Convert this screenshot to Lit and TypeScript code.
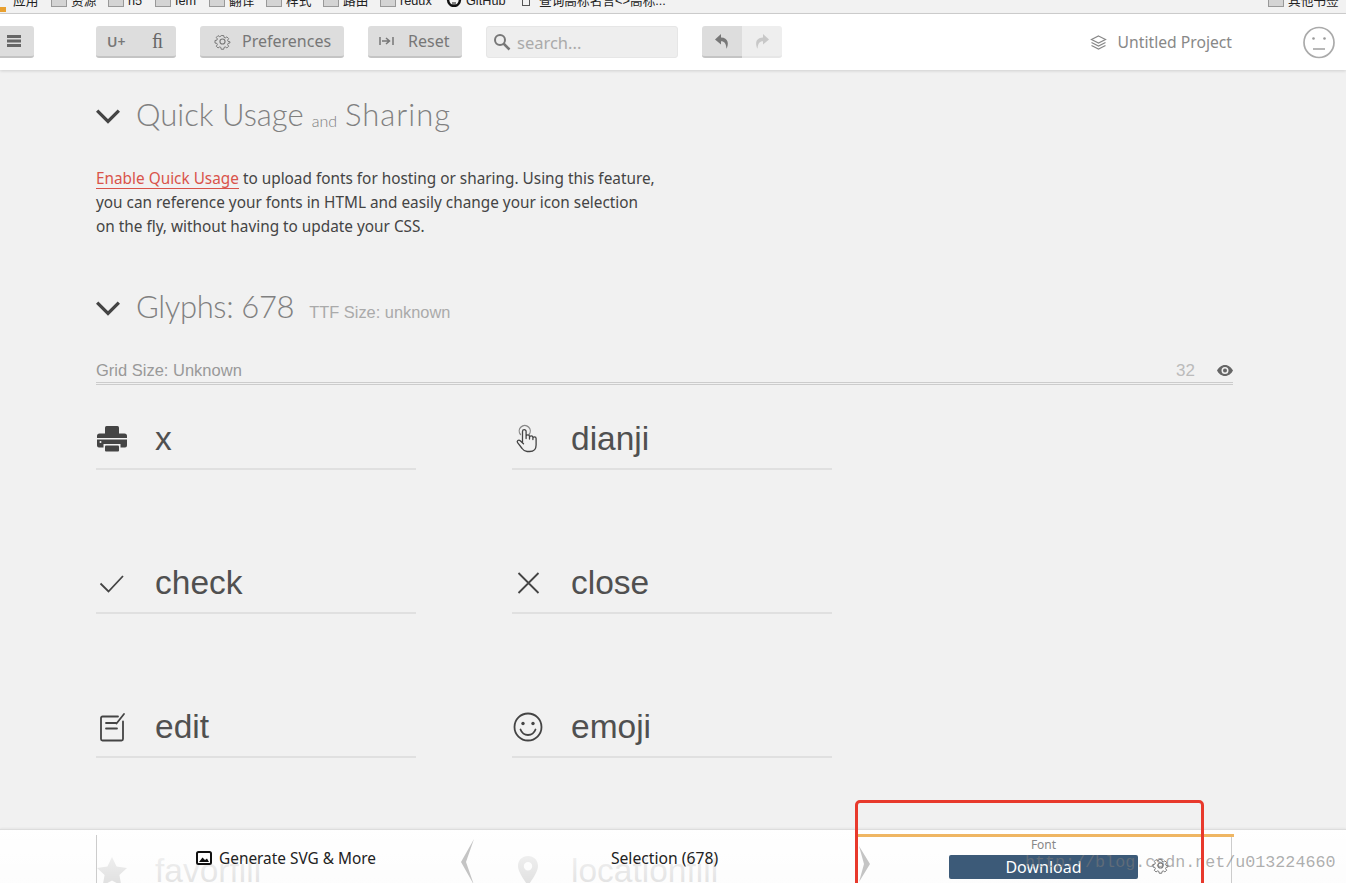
import { LitElement, html, css, svg } from "lit";
import { customElement } from "lit/decorators.js";

const gear = (s: number, c: string) => html`<svg width=${s} height=${s} viewBox="0 0 24 24" fill="none" stroke=${c} stroke-width="1.6"><circle cx="12" cy="12" r="3.6"/><path d="M10 2.5h4l.6 3 1.9.8 2.6-1.7 2.8 2.8-1.7 2.6.8 1.9 3 .6-.1 1.9-2.9.7-.8 1.9 1.7 2.6-2.8 2.8-2.6-1.7-1.9.8-.6 3h-4l-.6-3-1.9-.8-2.6 1.7-2.8-2.8 1.7-2.6-.8-1.9-3-.6v-4l3-.6.8-1.9-1.7-2.6 2.8-2.8 2.6 1.7 1.9-.8z" transform="translate(1.4 1.4) scale(.88)"/></svg>`;

const icons: Record<string, unknown> = {
  printer: html`<svg width="32" height="28" viewBox="0 0 32 28" fill="#444"><rect x="9" y="1" width="14" height="9" rx="1.5"/><path d="M3.5 8.5h25a2.5 2.5 0 0 1 2.5 2.5v2H1v-2a2.5 2.5 0 0 1 2.5-2.5zM1 14.500h30v6a2 2 0 0 1-2 2h-4.500v-3.500h-17v3.500H3a2 2 0 0 1-2-2z"/><rect x="9" y="20.500" width="14" height="6" rx="1"/><circle cx="4.500" cy="17" r="1" fill="#f1f1f1"/></svg>`,
  hand: html`<svg width="32" height="30" viewBox="0 0 32 30" fill="none" stroke="#444" stroke-width="1.3" stroke-linejoin="round" stroke-linecap="round"><path d="M8.500 10.500a5.500 5.500 0 1 1 8.500 0" stroke="#888"/><path d="M10.500 18V7.500a1.800 1.800 0 0 1 3.600 0V14.500M14.100 12.500a1.700 1.700 0 0 1 3.400 0v2.500M17.500 13.500a1.700 1.700 0 0 1 3.400 0v2M20.900 14.500a1.600 1.600 0 0 1 3.200 0v6.500c0 4-2.600 6.500-6.500 6.500h-2.500c-2.500 0-3.800-1.300-5-3l-4.500-5.800c-1.200-1.700 1-3.500 2.600-2l3.300 3"/></svg>`,
  check: html`<svg width="32" height="28" viewBox="0 0 32 28" fill="none" stroke="#444" stroke-width="1.800"><path d="M4.500 14.500l8 8L27 7"/></svg>`,
  close: html`<svg width="32" height="28" viewBox="0 0 32 28" fill="none" stroke="#444" stroke-width="1.800"><path d="M6.500 4l20 20M26.500 4l-20 20"/></svg>`,
  edit: html`<svg width="32" height="30" viewBox="0 0 32 30" fill="none" stroke="#444" stroke-width="1.800" stroke-linecap="round"><path d="M22 4.500H6.500a1.500 1.500 0 0 0-1.500 1.500v21a1.500 1.500 0 0 0 1.500 1.500h19a1.500 1.500 0 0 0 1.500-1.500V9.500"/><path d="M10 11h10M10 16.500h11M20.500 11.500L28 2"/></svg>`,
  emoji: html`<svg width="32" height="32" viewBox="0 0 32 32" fill="none" stroke="#444" stroke-width="1.800"><circle cx="16" cy="16" r="13.500"/><circle cx="11" cy="12.500" r="1.700" fill="#444" stroke="none"/><circle cx="21" cy="12.500" r="1.700" fill="#444" stroke="none"/><path d="M8.500 18.500c1.500 4 4.300 5.500 7.500 5.500s6-1.500 7.500-5.500" stroke-linecap="round"/></svg>`,
  star: html`<svg width="32" height="30" viewBox="0 0 32 30" fill="#444"><path d="M16 1l4.600 9.500 10.400 1.400-7.600 7.200 1.900 10.400L16 24.500l-9.300 5 1.900-10.400L1 11.900l10.400-1.400z"/></svg>`,
  pin: html`<svg width="32" height="32" viewBox="0 0 32 32" fill="#444"><path fill-rule="evenodd" d="M16 1c5.800 0 10 4.300 10 10 0 6-6 13.500-10 20-4-6.500-10-14-10-20C6 5.300 10.200 1 16 1zm0 6a4.200 4.200 0 1 0 0 8.400A4.200 4.200 0 0 0 16 7z"/></svg>`,
};

const glyphs: [string, string][] = [
  ["printer", "x"], ["hand", "dianji"],
  ["check", "check"], ["close", "close"],
  ["edit", "edit"], ["emoji", "emoji"],
  ["star", "favorfill"], ["pin", "locationfill"],
];

const bookmarks: [string, number, string][] = [
  ["应用", 13, ""], ["资源", 71, "f"], ["h5", 128, "f"], ["fem", 175, "f"],
  ["翻译", 229, "f"], ["样式", 286, "f"], ["路由", 343, "f"], ["redux", 400, "f"],
  ["GitHub", 466, "g"], ["查询高标名言<>高标...", 539, "d"],
];

const chevron = svg`<path d="M2 8l10 10 10-10" fill="none" stroke="#444" stroke-width="3"/>`;

const bmIcon = (k: string) =>
  k === "f"
    ? html`<i class="folder"></i>`
    : k === "g"
      ? html`<svg class="gh" width="16" height="14" viewBox="0 0 16 14" fill="none" stroke="#111" stroke-width="2.500"><path d="M2 6c0 4 2.500 7 6 7s6-3 6-7"/><path d="M7 9v5M9 9v5" stroke-width="1"/></svg>`
      : k === "d"
        ? html`<i class="doc"></i>`
        : "";

@customElement("app-root")
export class AppRoot extends LitElement {
  static styles = css`
    :host { display: block; position: relative; width: 1346px; height: 883px; overflow: hidden; background: #f1f1f1; font-family: "Noto Sans", sans-serif; color: #444; }
    .bm { height: 14px; box-sizing: border-box; background: #f2f2f2; border-bottom: 1px solid #d0d0d0; display: flex; align-items: flex-end; overflow: hidden; font: 12.700px/17px "Liberation Sans", "Noto Sans CJK SC", sans-serif; color: #222; position: relative; }
    .bm-row { display: flex; width: 100%; height: 20px; flex: none; align-items: flex-start; }
    .bm-item { width: 0; flex: none; white-space: nowrap; display: block; }
    .bm-item span { display: inline-block; }
    .folder { display: inline-block; width: 16px; height: 14px; background: #d4d4d4; border: 1px solid #999; box-sizing: border-box; margin: 0 4px 0 -20px; vertical-align: top; }
    .gh { margin: 0 4px 0 -20px; vertical-align: top; }
    .doc { display: inline-block; width: 8px; height: 13px; border: 1px solid #555; box-sizing: border-box; margin: 0 9px 0 -17px; vertical-align: top; }
    .bm-spacer { white-space: nowrap; width: 0; }
    .bm-dot { position: absolute; left: 0; bottom: 1px; width: 6px; height: 5px; background: #e8a030; }
    .bar { height: 56px; box-sizing: border-box; background: #fff; box-shadow: 0 1px 3px rgba(0,0,0,.14); display: flex; align-items: center; padding-right: 11px; position: relative; }
    .btn { height: 32px; box-sizing: border-box; background: #ddd; border-bottom: 2px solid #c4c4c4; border-radius: 3px; display: flex; align-items: center; color: #777; font-size: 16px; }
    .menu { width: 34px; padding-left: 7px; border-radius: 0 3px 3px 0; margin-right: 62px; }
    .cp { width: 80px; margin-right: 24px; justify-content: space-between; padding: 0 13px 0 11px; }
    .cp .u { font-size: 14px; font-weight: 600; }
    .cp .fi { font: 20px "Liberation Serif", serif; color: #666; }
    .pref { width: 144px; padding-left: 14px; gap: 11px; margin-right: 24px; }
    .reset { width: 94px; padding-left: 11px; gap: 12px; margin-right: 24px; }
    .search { width: 192px; height: 32px; box-sizing: border-box; background: #eee; border: 1px solid #e6e6e6; border-radius: 3px; display: flex; align-items: center; padding-left: 6px; gap: 6px; color: #aaa; font-size: 16.500px; margin-right: 24px; }
    .hist { display: flex; width: 80px; height: 32px; }
    .hist div { flex: 1; display: flex; align-items: center; justify-content: center; box-sizing: border-box; }
    .hist .on { background: #ddd; border-bottom: 2px solid #c4c4c4; border-radius: 3px 0 0 3px; }
    .hist .off { background: #eee; border-bottom: 2px solid #e6e6e6; border-radius: 0 3px 3px 0; }
    .proj { margin-left: auto; display: flex; align-items: center; gap: 11px; color: #888; font-size: 15.700px; margin-right: 71px; }
    .main { padding: 0 113px 0 96px; }
    .h { display: flex; align-items: center; height: 40px; font: 300 31px "Lato", sans-serif; color: #808080; white-space: nowrap; }
    .h svg { width: 26px; height: 26px; margin: 0 15px 0 -1px; flex: none; }
    .h .t { padding-bottom: 2px; }
    .h .first { margin-right: 8px; }
    .h .sharing { letter-spacing: 1px; }
    .h small { font-size: 16px; margin: 10px 8px 0 0; }
    .h1 { margin-top: 25px; }
    .h2 { margin-top: 49px; }
    .h2 .glyph { letter-spacing: -.35px; }
    .h2 .sub { font: 16.400px "Liberation Sans", sans-serif; color: #aaa; margin: 11px 0 0 15px; }
    .p { margin: 31px 0 0; font-size: 15.350px; line-height: 24px; color: #444; width: 560px; }
    .p a { color: #d9534a; border-bottom: 1px solid #d9534a; }
    .grid-bar { margin-top: 33px; height: 25px; box-sizing: border-box; display: flex; align-items: center; justify-content: space-between; border-bottom: 3px double #ccc; font: 16.500px "Liberation Sans", sans-serif; color: #999; padding-bottom: 1px; }
    .grid-right { display: flex; align-items: center; color: #bbb; font-size: 17px; gap: 22px; }
    .grid { display: grid; grid-template-columns: 320px 320px; column-gap: 96px; row-gap: 84px; margin-top: 25px; }
    .item { height: 60px; box-sizing: border-box; border-bottom: 2px solid #e0e0e0; display: flex; align-items: center; }
    .ic { width: 32px; display: flex; justify-content: center; }
    .name { margin-left: 27px; font: 33.500px "Liberation Sans", sans-serif; color: #505050; white-space: nowrap; }
    .foot { position: absolute; left: 0; right: 0; bottom: 0; height: 54px; box-sizing: border-box; border-top: 1px solid #ddd; background: linear-gradient(rgba(255,255,255,.99), rgba(255,255,255,.84)); padding: 0 114px 0 96px; box-shadow: 0 -1px 2px rgba(0,0,0,.05); }
    .tabs { display: grid; grid-template-columns: 378px 379px 379px; height: 100%; border: 0 solid #ccc; border-width: 0 1px; box-sizing: border-box; margin-top: 5px; position: relative; }
    .tab { position: relative; display: flex; align-items: center; justify-content: center; font-size: 15.400px; color: #222; height: 48px; }
    .tab-text { transform: translateY(-1px); display: flex; align-items: center; gap: 7px; }
    .selection { font-size: 15.700px; }
    .tab3 { display: block; text-align: center; font-size: 12px; color: #888; border-top: 3px solid #efb663; height: 46px; margin: -1px -1px 0 4px; box-sizing: border-box; padding-right: 5px; line-height: 15px; }
    .dl { width: 189px; height: 24px; margin: 3px auto 0; background: #3c5a78; color: #fff; border-radius: 2px; font-size: 16px; line-height: 24px; }
    .gear { position: absolute; left: 294px; top: 20px; }
    .chev { position: absolute; }
    .c1 { right: 0; top: 4px; }
    .c2 { left: 0; top: 9px; }
    .mark { position: absolute; left: 1025px; top: 853px; font: 16.700px "Liberation Mono", monospace; color: rgba(120,120,120,.6); white-space: nowrap; }
    .red { position: absolute; left: 855px; top: 800px; width: 349px; height: 90px; box-sizing: border-box; border: 3px solid #e8392c; border-radius: 5px; }
  `;

  render() {
    let prev = 0;
    return html`
      <div class="bm">
        <div class="bm-dot"></div>
        <div class="bm-row">
          ${bookmarks.map(([t, x, k]) => {
            const m = x - prev;
            prev = x;
            return html`<div class="bm-item" style="margin-left:${m}px">${bmIcon(k)}<span>${t}</span></div>`;
          })}
          <div class="bm-spacer" style="margin-left:${1288 - 539}px"><i class="folder"></i><span>其他书签</span></div>
        </div>
      </div>
      <div class="bar">
        <div class="btn menu"><svg width="14" height="12" viewBox="0 0 14 12" fill="#666"><rect y="0" width="14" height="3"/><rect y="4.500" width="14" height="3"/><rect y="9" width="14" height="3"/></svg></div>
        <div class="btn cp"><span class="u">U+</span><span class="fi">ﬁ</span></div>
        <div class="btn pref">${gear(17, "#777")}<span>Preferences</span></div>
        <div class="btn reset"><svg width="17" height="12" viewBox="0 0 17 12" fill="none" stroke="#777" stroke-width="1.500"><path d="M1 2v8M3 6h7M7 3l3.500 3L7 9M14 2v8"/></svg><span>Reset</span></div>
        <div class="search"><svg width="18" height="18" viewBox="0 0 18 18" fill="none" stroke="#777" stroke-width="2"><circle cx="7" cy="7" r="5"/><path d="M10.500 10.500l6 6" stroke-width="2.500"/></svg><span>search...</span></div>
        <div class="hist">
          <div class="on"><svg width="14" height="15" viewBox="0 0 14 15" fill="#777"><path d="M6 0L0 5.500 6 10.500V7.300c3.500 0 5 2 5.500 7.500C14 10 13.500 3.500 6 3.400z"/></svg></div>
          <div class="off"><svg width="14" height="15" viewBox="0 0 14 15" fill="#c8c8c8"><path d="M8 0l6 5.500L8 10.500V7.300c-3.500 0-5 2-5.500 7.500C0 10 .5 3.500 8 3.400z"/></svg></div>
        </div>
        <div class="proj"><svg width="17" height="15" viewBox="0 0 17 15" fill="none" stroke="#888" stroke-width="1.200"><path d="M8.500 1l7 3.500-7 3.500-7-3.500zM1.500 7.500l7 3.500 7-3.500M1.500 10.500l7 3.500 7-3.500"/></svg><span>Untitled Project</span></div>
        <svg width="32" height="33" viewBox="0 0 32 33" fill="none" stroke="#aaa" stroke-width="1.700"><circle cx="16" cy="16.500" r="15"/><circle cx="10.500" cy="12.500" r="1.300" fill="#999" stroke="none"/><circle cx="21.500" cy="12.500" r="1.300" fill="#999" stroke="none"/><path d="M10 23h12"/></svg>
      </div>
      <div class="main">
        <div class="h h1"><svg viewBox="0 0 24 24">${chevron}</svg><span class="t first">Quick Usage</span><small>and</small><span class="t sharing">Sharing</span></div>
        <p class="p"><a>Enable Quick Usage</a> to upload fonts for hosting or sharing. Using this feature,<br />you can reference your fonts in HTML and easily change your icon selection<br />on the fly, without having to update your CSS.</p>
        <div class="h h2"><svg viewBox="0 0 24 24">${chevron}</svg><span class="t glyph">Glyphs: 678</span><span class="sub">TTF Size: unknown</span></div>
        <div class="grid-bar"><span>Grid Size: Unknown</span><span class="grid-right"><span>32</span><svg width="16" height="11" viewBox="0 0 16 11" fill="#666"><path fill-rule="evenodd" d="M8 0c3.500 0 6.500 2.500 8 5.500-1.500 3-4.500 5.500-8 5.500S1.500 8.500 0 5.500C1.500 2.500 4.500 0 8 0zm0 2a3.500 3.500 0 1 0 0 7 3.500 3.500 0 0 0 0-7z"/><circle cx="8" cy="5.500" r="2"/></svg></span></div>
        <div class="grid">
          ${glyphs.map(([i, n]) => html`<div class="item"><span class="ic">${icons[i]}</span><span class="name">${n}</span></div>`)}
        </div>
      </div>
      <div class="foot">
        <div class="tabs">
          <div class="tab"><span class="tab-text"><svg width="16" height="14" viewBox="0 0 16 14"><rect x="1" y="1" width="14" height="12" rx="1.500" fill="#fff" stroke="#111" stroke-width="2"/><path d="M3 11l3.500-4.500 2.500 2.500 2-1.500 2 3.500z" fill="#111"/></svg>Generate SVG &amp; More</span>
            <svg class="chev c1" width="15" height="46" viewBox="0 0 15 46"><path d="M14 0L1 23l13 23L6 23z" fill="#c4c4c4"/></svg></div>
          <div class="tab"><span class="tab-text selection">Selection (678)</span></div>
          <div class="tab tab3"><div>Font<div class="dl">Download</div></div>
            <svg class="chev c2" width="13" height="36" viewBox="0 0 13 36"><path d="M1 0l11 18L1 36l5-18z" fill="#c4c4c4"/></svg>
            <span class="gear">${gear(17, "#777")}</span></div>
        </div>
      </div>
      <div class="mark">http://blog.csdn.net/u013224660</div>
      <div class="red"></div>
    `;
  }
}
